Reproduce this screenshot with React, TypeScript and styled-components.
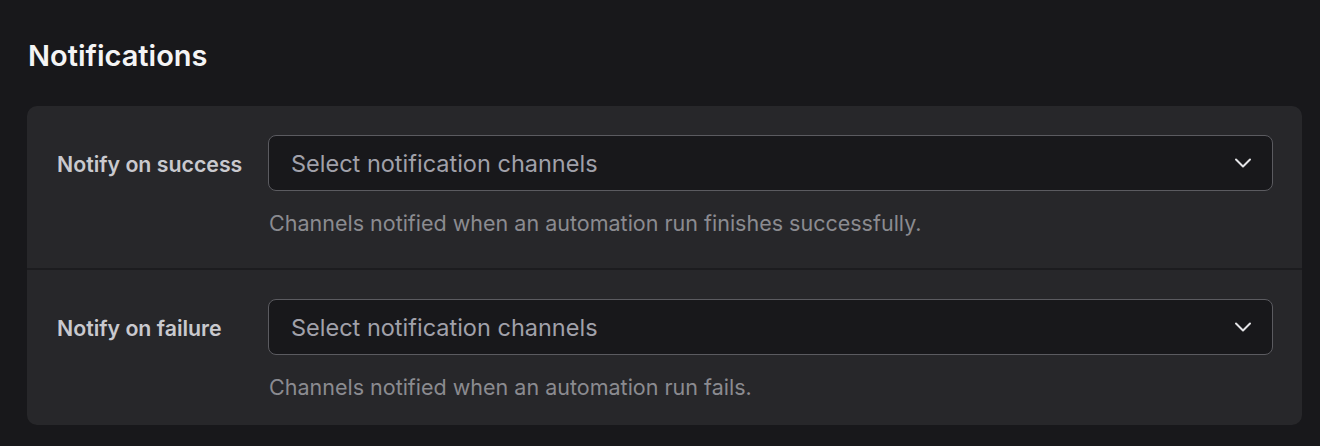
import { createGlobalStyle, styled } from "styled-components";

const GlobalStyle = createGlobalStyle`
  body {
    margin: 0;
    background: #18181b;
    font-family: Inter, "Noto Sans", sans-serif;
    -webkit-font-smoothing: antialiased;
  }
`;

type Channel = {
  label: string;
  hint: string;
};

const channels: Channel[] = [
  {
    label: "Notify on success",
    hint: "Channels notified when an automation run finishes successfully.",
  },
  {
    label: "Notify on failure",
    hint: "Channels notified when an automation run fails.",
  },
];

const Chevron = () => (
  <svg width="28" height="28" viewBox="0 0 24 24" fill="none">
    <path
      d="M6 9l6 6 6-6"
      stroke="#e4e4e7"
      strokeWidth="1.7"
      strokeLinecap="round"
      strokeLinejoin="round"
    />
  </svg>
);

const App = (): JSX.Element => {
  return (
    <>
      <GlobalStyle />
      <Section>
        <Title>Notifications</Title>
        <Card>
          {channels.map((c) => (
            <Row key={c.label}>
              <Label>{c.label}</Label>
              <Field>
                <Select type="button">
                  <span>Select notification channels</span>
                  <Chevron />
                </Select>
                <Hint>{c.hint}</Hint>
              </Field>
            </Row>
          ))}
        </Card>
      </Section>
    </>
  );
};

export default App;

const Section = styled.section`
  padding: 38px 18px 21px 27px;
`;

const Title = styled.h2`
  margin: 0 0 32px 1px;
  font-size: 29px;
  line-height: 36px;
  font-weight: 600;
  color: #f4f4f5;
`;

// rows are split by a dark rule the colour of the page
const Card = styled.div`
  background: #27272a;
  border-radius: 10px;
  overflow: hidden;
  display: flex;
  flex-direction: column;

  & > * + * {
    border-top: 2px solid #1c1c1f;
  }
`;

const Row = styled.div`
  display: grid;
  grid-template-columns: 211px 1fr;
  align-items: start;
  padding: 29px 29px 31px 30px;

  & + & {
    padding-bottom: 24px;
  }
`;

const Label = styled.div`
  height: 56px;
  display: flex;
  align-items: center;
  font-size: 21.3px;
  font-weight: 600;
  color: #c9c9ce;
  padding-top: 2px;
  box-sizing: border-box;
`;

const Field = styled.div`
  display: flex;
  flex-direction: column;
  gap: 18px;
`;

const Select = styled.button`
  height: 56px;
  display: flex;
  align-items: center;
  justify-content: space-between;
  padding: 0 15px 0 22px;
  background: #18181b;
  border: 1px solid #5b5b60;
  border-radius: 8px;
  font-family: inherit;
  font-size: 23.5px;
  color: #a1a1aa;
  text-align: left;
  cursor: pointer;
`;

const Hint = styled.p`
  margin: 0;
  padding-left: 1px;
  font-size: 21.5px;
  line-height: 28px;
  color: #8b8b90;
`;
